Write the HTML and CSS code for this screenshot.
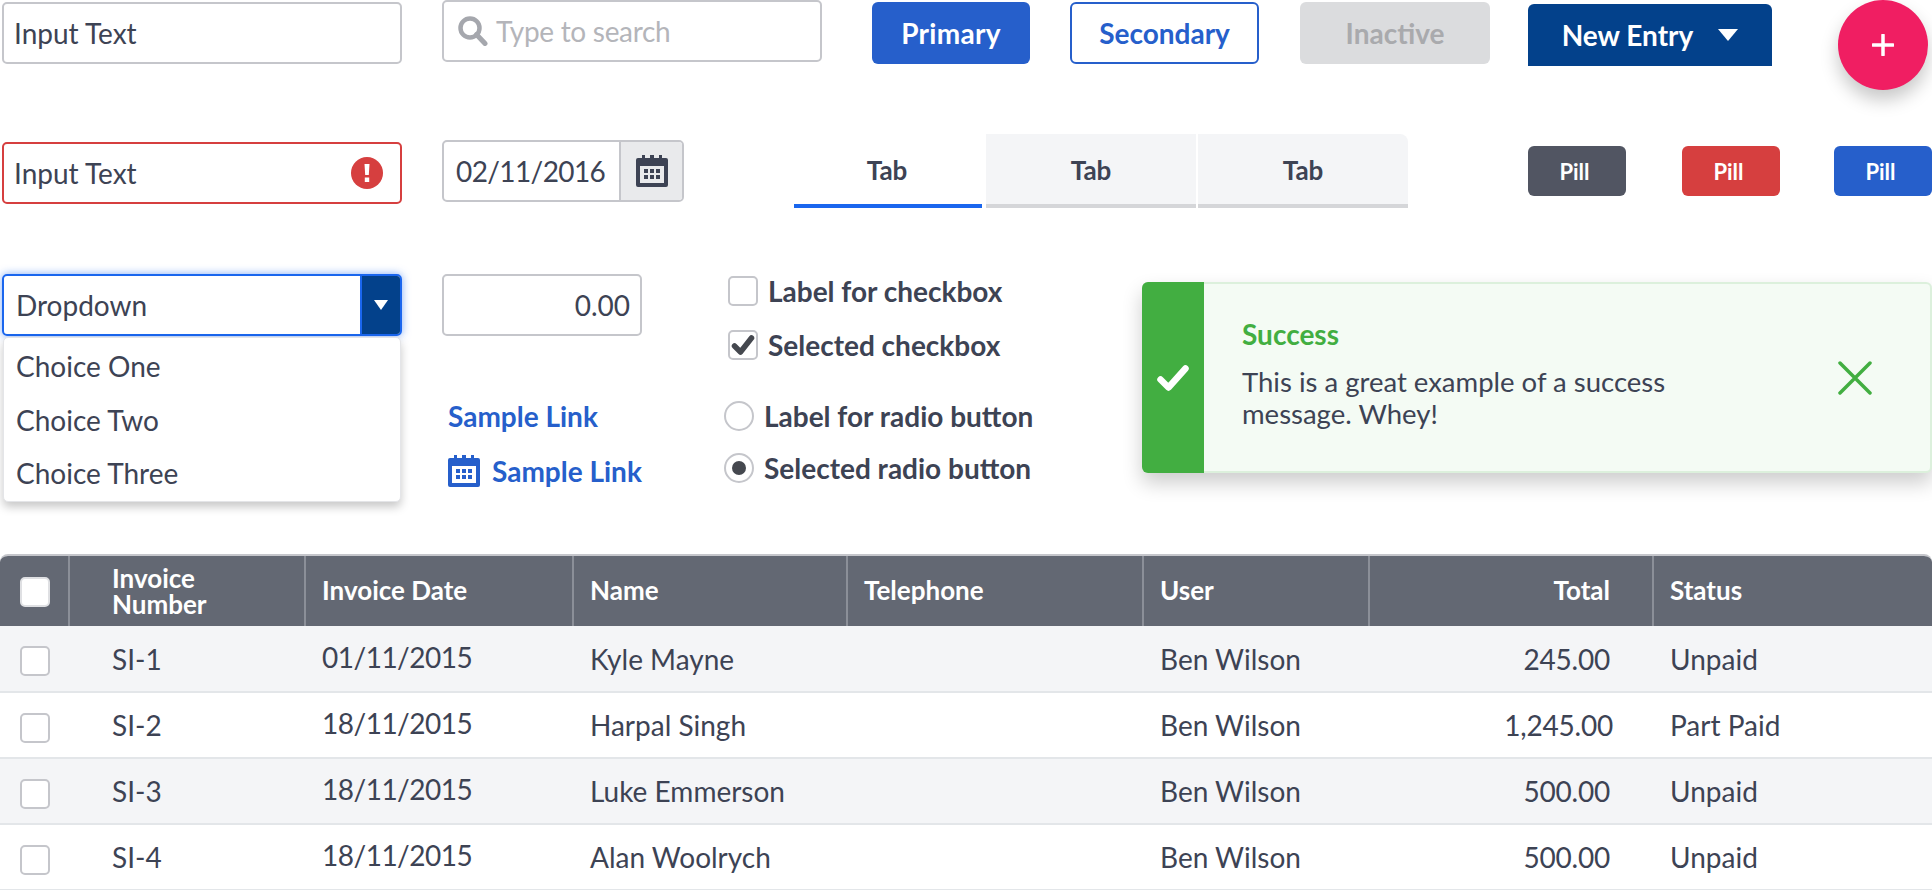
FILE: index.html
```html
<!DOCTYPE html>
<html lang="en">
<head>
  <meta charset="UTF-8">
  <title>UI Kit</title>
  <link rel="stylesheet" href="styles.css">
</head>
<body>

  <!-- first row: inputs and buttons -->
  <div class="row row-one">
    <div class="field field-text">Input Text</div>
    <div class="field field-search">
      <svg class="icon-search" width="30" height="30" viewBox="0 0 30 30"><circle cx="12" cy="12" r="9.5" fill="none" stroke="#a5a7ad" stroke-width="4.5"/><path d="M18.5 18.5L27 27.5" stroke="#a5a7ad" stroke-width="5" stroke-linecap="round"/></svg>
      <span class="placeholder">Type to search</span>
    </div>
    <a class="btn btn-primary">Primary</a>
    <a class="btn btn-secondary">Secondary</a>
    <a class="btn btn-inactive">Inactive</a>
    <a class="btn btn-new">New Entry <span class="caret"></span></a>
    <a class="fab">
      <svg width="22" height="22" viewBox="0 0 22 22"><path d="M11 1v20M1 11h20" stroke="#fff" stroke-width="3.5" stroke-linecap="round"/></svg>
    </a>
  </div>

  <!-- second row: error, date, tabs, pills -->
  <div class="row row-two">
    <div class="field field-text field-error">
      Input Text
      <svg width="32" height="32" viewBox="0 0 32 32"><circle cx="16" cy="16" r="16" fill="#d63f3f"/><path d="M13.5 7h5l-.7 11h-3.6zM13.8 20.5h4.4v4.5h-4.4z" fill="#fff"/></svg>
    </div>
    <div class="field field-date">
      <span class="date-value">02/11/2016</span>
      <span class="date-btn">
        <svg width="32" height="32" viewBox="0 0 32 32"><path fill="#3d4354" fill-rule="evenodd" d="M6 0h3v3h5V0h4v3h5V0h3v3h4a2 2 0 0 1 2 2v25a2 2 0 0 1-2 2H2a2 2 0 0 1-2-2V5a2 2 0 0 1 2-2h4zM4 11v17h24V11zM8 14h4v4H8zM14 14h4v4h-4zM20 14h4v4h-4zM8 20h4v4H8zM14 20h4v4h-4zM20 20h4v4h-4z"/></svg>
      </span>
    </div>
    <div class="tabs">
      <div class="tab tab-active">Tab</div>
      <div class="tab tab-mid">Tab</div>
      <div class="tab tab-last">Tab</div>
    </div>
    <div class="pills">
      <span class="pill pill-dark">Pill</span>
      <span class="pill pill-red">Pill</span>
      <span class="pill pill-blue">Pill</span>
    </div>
  </div>

  <!-- third row: dropdown, links, checks, message -->
  <div class="row row-three">
    <div class="col-dropdown">
      <div class="dropdown">
        <span class="dropdown-text">Dropdown</span>
        <span class="dropdown-btn"><span class="caret caret-small"></span></span>
      </div>
      <ul class="menu">
        <li>Choice One</li>
        <li>Choice Two</li>
        <li>Choice Three</li>
      </ul>
    </div>
    <div class="col-links">
      <div class="field field-number">0.00</div>
      <a class="link link-plain">Sample Link</a>
      <a class="link link-icon">
        <svg width="32" height="32" viewBox="0 0 32 32"><path fill="#265fcb" fill-rule="evenodd" d="M6 0h3v3h5V0h4v3h5V0h3v3h4a2 2 0 0 1 2 2v25a2 2 0 0 1-2 2H2a2 2 0 0 1-2-2V5a2 2 0 0 1 2-2h4zM4 11v17h24V11zM8 14h4v4H8zM14 14h4v4h-4zM20 14h4v4h-4zM8 20h4v4H8zM14 20h4v4h-4zM20 20h4v4h-4z"/></svg>
        Sample Link
      </a>
    </div>
    <div class="col-checks">
      <label class="check"><span class="box"></span>Label for checkbox</label>
      <label class="check check-second">
        <span class="box">
          <svg width="24" height="22" viewBox="0 0 24 22"><path d="M3.5 12l6 6L20.500 4" fill="none" stroke="#45484f" stroke-width="5.500" stroke-linecap="round" stroke-linejoin="round"/></svg>
        </span>Selected checkbox
      </label>
      <label class="radio radio-first"><span class="circle"></span>Label for radio button</label>
      <label class="radio radio-second"><span class="circle"><span class="dot"></span></span>Selected radio button</label>
    </div>
    <div class="toast">
      <div class="toast-side">
        <svg width="32" height="26" viewBox="0 0 32 26"><path d="M3.500 14.500l8 8L28.500 3.500" fill="none" stroke="#fff" stroke-width="6.500" stroke-linecap="round" stroke-linejoin="round"/></svg>
      </div>
      <div class="toast-body">
        <div class="toast-title">Success</div>
        <p class="toast-text">This is a great example of a success message. Whey!</p>
      </div>
      <svg class="toast-close" width="34" height="34" viewBox="0 0 34 34"><path d="M2 2l30 30M32 2L2 32" stroke="#42ae41" stroke-width="3.500" stroke-linecap="round"/></svg>
    </div>
  </div>

  <div class="table-wrap">
    <table>
      <colgroup>
        <col class="c-check"><col class="c-number"><col class="c-date"><col class="c-name">
        <col class="c-tel"><col class="c-user"><col class="c-total"><col class="c-status">
      </colgroup>
      <thead>
        <tr>
          <th class="cell-check"><span class="box box-head"></span></th>
          <th class="cell-number">Invoice<br>Number</th>
          <th>Invoice Date</th>
          <th>Name</th>
          <th>Telephone</th>
          <th>User</th>
          <th class="cell-total">Total</th>
          <th>Status</th>
        </tr>
      </thead>
      <tbody>
        <tr>
          <td class="cell-check"><span class="box"></span></td>
          <td class="cell-number">SI-1</td>
          <td class="cell-date">01/11/2015</td>
          <td>Kyle Mayne</td>
          <td></td>
          <td>Ben Wilson</td>
          <td class="cell-total">245.00</td>
          <td>Unpaid</td>
        </tr>
        <tr>
          <td class="cell-check"><span class="box"></span></td>
          <td class="cell-number">SI-2</td>
          <td class="cell-date">18/11/2015</td>
          <td>Harpal Singh</td>
          <td></td>
          <td>Ben Wilson</td>
          <td class="cell-total cell-long">1,245.00</td>
          <td>Part Paid</td>
        </tr>
        <tr>
          <td class="cell-check"><span class="box"></span></td>
          <td class="cell-number">SI-3</td>
          <td class="cell-date">18/11/2015</td>
          <td>Luke Emmerson</td>
          <td></td>
          <td>Ben Wilson</td>
          <td class="cell-total">500.00</td>
          <td>Unpaid</td>
        </tr>
        <tr>
          <td class="cell-check"><span class="box"></span></td>
          <td class="cell-number">SI-4</td>
          <td class="cell-date">18/11/2015</td>
          <td>Alan Woolrych</td>
          <td></td>
          <td>Ben Wilson</td>
          <td class="cell-total">500.00</td>
          <td>Unpaid</td>
        </tr>
      </tbody>
    </table>
  </div>

</body>
</html>
```

FILE: styles.css
```css
body {
  margin: 0;
  width: 1932px;
  height: 890px;
  overflow: hidden;
  background: #fff;
  color: #3d4354;
  font-family: Lato, "Open Sans", sans-serif;
  font-size: 28px;
}

.row {
  display: flex;
  align-items: flex-start;
  padding-left: 2px;
}

.row > * { flex: none; }

.row-one { height: 134px; }
.row-two { height: 140px; }
.row-three { height: 280px; }

/* inputs */
.field {
  box-sizing: border-box;
  display: flex;
  align-items: center;
  height: 62px;
  background: #fff;
  border: 2px solid #c5c6cb;
  border-radius: 5px;
}

.field-text {
  width: 400px;
  margin-top: 2px;
  padding: 0 10px 0 10px;
  justify-content: space-between;
}

.field-search {
  width: 380px;
  margin-left: 40px;
  padding-left: 14px;
}

.icon-search {
  margin-right: 8px;
  flex: none;
}

.placeholder {
  color: #b4b5ba;
  letter-spacing: -0.3px;
}

.field-error {
  margin-top: 8px;
  border-color: #d63f3f;
  padding-right: 17px;
}

.field-date {
  width: 242px;
  margin: 6px 0 0 40px;
  padding-left: 12px;
}

.date-value {
  flex: 1;
  letter-spacing: -0.6px;
}

.date-btn {
  display: flex;
  align-items: center;
  justify-content: center;
  width: 61px;
  height: 100%;
  background: #e9eaec;
  border-left: 2px solid #c5c6cb;
  border-radius: 0 3px 3px 0;
}

.field-number {
  width: 200px;
  margin: 0;
  padding-right: 10px;
  justify-content: flex-end;
}

/* buttons */
.btn {
  box-sizing: border-box;
  display: flex;
  align-items: center;
  justify-content: center;
  height: 62px;
  margin-top: 2px;
  border-radius: 6px;
  font-weight: 700;
}

.btn-primary {
  width: 158px;
  margin-left: 50px;
  background: #265fcb;
  color: #fff;
  letter-spacing: 0.3px;
}

.btn-secondary {
  width: 189px;
  margin-left: 40px;
  background: #fff;
  border: 2px solid #265fcb;
  color: #265fcb;
}

.btn-inactive {
  width: 190px;
  margin-left: 41px;
  background: #dbdcde;
  color: #a9aaad;
}

.btn-new {
  width: 244px;
  height: 62px;
  margin: 4px 0 0 38px;
  background: #03418b;
  color: #fff;
  border-radius: 6px 6px 0 0;
}

.caret {
  display: inline-block;
  margin-left: 25px;
  border-left: 10px solid transparent;
  border-right: 10px solid transparent;
  border-top: 12px solid #fff;
}

.caret-small {
  margin: 0;
  border-left-width: 7px;
  border-right-width: 7px;
  border-top-width: 10px;
}

.fab {
  display: flex;
  align-items: center;
  justify-content: center;
  width: 90px;
  height: 90px;
  margin-left: 66px;
  border-radius: 50%;
  background: #f01e62;
  box-shadow: 0 10px 18px rgba(0, 0, 0, 0.22);
}

/* tabs */
.tabs {
  display: flex;
  margin-left: 110px;
}

.tab {
  box-sizing: border-box;
  width: 210px;
  height: 74px;
  padding-top: 20px;
  text-align: center;
  font-size: 26px;
  font-weight: 700;
  background: #f4f5f7;
  border-bottom: 4px solid #d5d6d9;
}

.tab-active {
  width: 188px;
  margin-right: 4px;
  padding-right: 2px;
  background: #fff;
  border-bottom-color: #1a66ee;
}

.tab-mid { margin-right: 2px; }
.tab-last { border-radius: 0 8px 0 0; }

/* pills */
.pills {
  display: flex;
  margin: 12px 0 0 120px;
  gap: 56px;
}

.pill {
  box-sizing: border-box;
  display: flex;
  align-items: center;
  justify-content: center;
  width: 98px;
  height: 50px;
  padding-right: 5px;
  border-radius: 6px;
  color: #fff;
  font-size: 22px;
  font-weight: 700;
}

.pill-dark { background: #515562; }
.pill-red { background: #d63f3f; }

.pill-blue {
  margin-left: -2px;
  background: #265fcb;
}

/* dropdown */
.col-dropdown { width: 400px; }

.dropdown {
  box-sizing: border-box;
  display: flex;
  height: 62px;
  border: 2px solid #1a66ee;
  border-radius: 5px;
  box-shadow: 0 0 8px rgba(26, 102, 238, 0.55);
}

.dropdown-text {
  flex: 1;
  padding-left: 12px;
  line-height: 58px;
  border-right: 2px solid #1a66ee;
}

.dropdown-btn {
  display: flex;
  align-items: center;
  justify-content: center;
  width: 38px;
  background: #03418b;
  border-radius: 0 3px 3px 0;
}

.menu {
  list-style: none;
  margin: 1px 1px 0;
  padding: 2px 0 0;
  background: #fff;
  border-radius: 5px;
  border: 1px solid #e4e5e8;
  box-shadow: 0 5px 10px rgba(0, 0, 0, 0.22);
}

.menu li {
  height: 53.500px;
  line-height: 53.500px;
  padding-left: 12px;
}

/* links */
.col-links {
  width: 283px;
  margin-left: 40px;
}

.link {
  display: flex;
  align-items: center;
  color: #265fcb;
  font-weight: 700;
}

.link-plain {
  margin: 60px 0 0 6px;
  height: 40px;
}

.link-icon {
  margin: 15px 0 0 6px;
  gap: 12px;
  height: 40px;
}

/* checks and radios */
.col-checks {
  width: 417px;
  font-weight: 700;
}

.check, .radio {
  display: flex;
  align-items: center;
  height: 30px;
}

.check {
  margin-left: 3px;
  margin-top: 2px;
  gap: 10px;
}

.check-second { margin-top: 24px; }

.box {
  box-sizing: border-box;
  display: inline-flex;
  align-items: center;
  justify-content: center;
  width: 30px;
  height: 30px;
  flex: none;
  background: #fff;
  border: 2px solid #c5c6cb;
  border-radius: 5px;
  vertical-align: middle;
}

.radio {
  margin-left: -1px;
  gap: 10px;
}

.radio-first { margin-top: 41px; }
.radio-second { margin-top: 22px; }

.circle {
  box-sizing: border-box;
  display: flex;
  align-items: center;
  justify-content: center;
  width: 30px;
  height: 30px;
  flex: none;
  border: 2px solid #c5c6cb;
  border-radius: 50%;
}

.dot {
  width: 14px;
  height: 14px;
  border-radius: 50%;
  background: #45484f;
}

/* message */
.toast {
  box-sizing: border-box;
  display: flex;
  align-items: center;
  width: 790px;
  height: 191px;
  margin-top: 8px;
  background: #f4fbf4;
  border: 2px solid #dcf0dc;
  border-left: 0;
  border-radius: 6px;
  box-shadow: 0 10px 20px rgba(0, 0, 0, 0.2);
}

.toast-side {
  display: flex;
  align-items: center;
  justify-content: center;
  width: 62px;
  align-self: stretch;
  margin: -2px 0;
  background: #42ae41;
  border-radius: 6px 0 0 6px;
}

.toast-body {
  width: 470px;
  margin-left: 38px;
  padding-bottom: 8px;
}

.toast-title {
  color: #42ae41;
  font-weight: 700;
  margin-bottom: 15px;
}

.toast-text {
  margin: 0;
  font-size: 27.500px;
  line-height: 32px;
}

.toast-close { margin-left: 126px; }

/* table */
.table-wrap {
  border-top: 2px solid #c5c6cb;
  border-radius: 8px 8px 0 0;
  overflow: hidden;
}

table {
  width: 1932px;
  table-layout: fixed;
  border-collapse: collapse;
}

.c-check { width: 69px; }
.c-number { width: 236px; }
.c-date { width: 268px; }
.c-name { width: 274px; }
.c-tel { width: 296px; }
.c-user { width: 226px; }
.c-total { width: 284px; }
.c-status { width: 279px; }

th {
  box-sizing: border-box;
  height: 70px;
  padding: 0 0 2px 16px;
  background: #636873;
  border-left: 2px solid #8b8f98;
  color: #fff;
  font-size: 26px;
  font-weight: 700;
  line-height: 26px;
  text-align: left;
}

th:first-child { border-left: 0; }

td {
  box-sizing: border-box;
  height: 66px;
  padding: 0 0 0 17px;
  border-bottom: 2px solid #e3e6e9;
  font-size: 28px;
}

tbody tr:nth-child(odd) { background: #f4f5f7; }

th.cell-check, td.cell-check {
  padding: 0 0 0 20px;
}

.box-head { border-color: #dfe0e3; }

th.cell-number { padding: 0 0 0 42px; }
td.cell-number { padding-left: 43px; }

td.cell-date {
  padding-bottom: 4px;
  letter-spacing: -0.5px;
}

th.cell-total {
  padding: 0 42px 2px 0;
  text-align: right;
}

td.cell-total {
  padding: 0 43px 0 0;
  letter-spacing: -0.2px;
  text-align: right;
}

td.cell-long { padding-right: 40px; }
```
